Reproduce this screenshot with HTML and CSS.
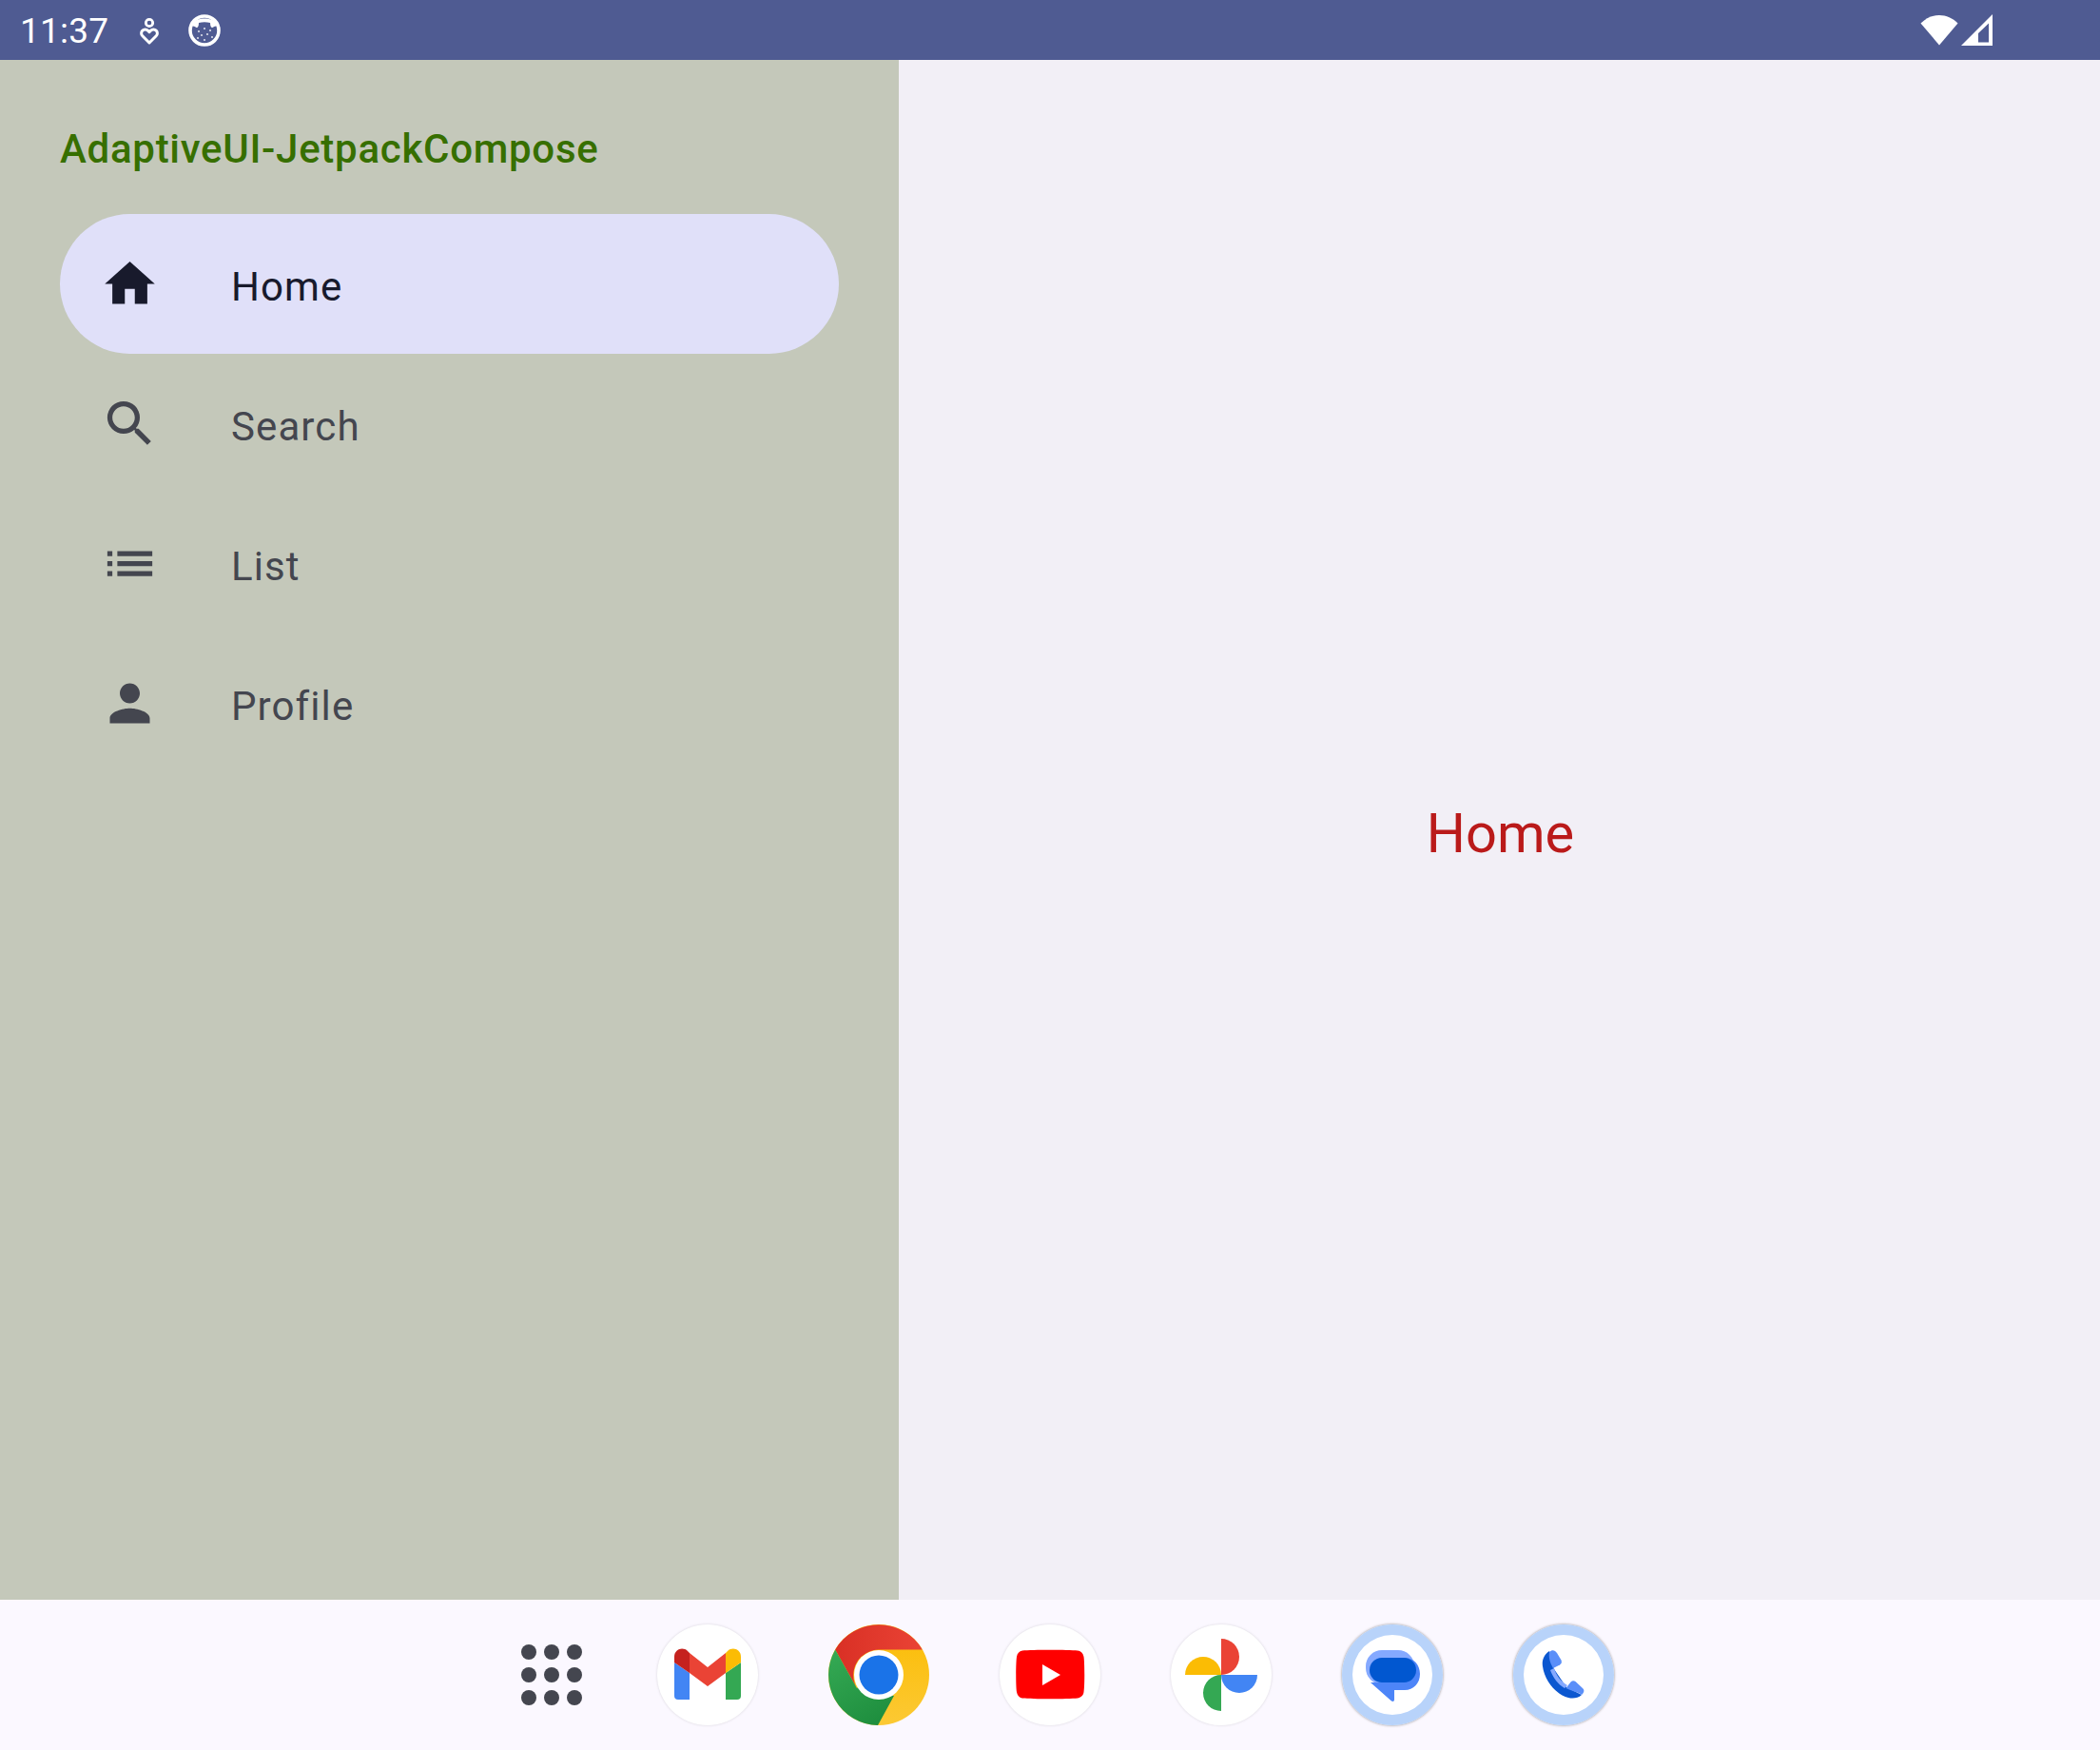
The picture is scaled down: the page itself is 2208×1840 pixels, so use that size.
FILE: index.html
```html
<!DOCTYPE html>
<html lang="en">
<head>
<meta charset="utf-8">
<title>AdaptiveUI-JetpackCompose</title>
<link rel="stylesheet" href="styles.css">
</head>
<body>
<div class="screen">
  <header class="status">
    <div class="status-left">
      <span class="time">11:37</span>
      <svg class="st-heart" viewBox="0 0 20 30"><circle cx="10" cy="7" r="3.7" fill="none" stroke="#fff" stroke-width="2.8"/><path d="M10 28 2.800 20.800a4 4 0 0 1 0-5.700 4 4 0 0 1 5.700 0L10 16.600l1.500-1.500a4 4 0 0 1 5.700 0 4 4 0 0 1 0 5.700z" fill="none" stroke="#fff" stroke-width="3" stroke-linejoin="round"/></svg>
      <svg class="st-face" viewBox="0 0 34 34"><circle cx="17" cy="17" r="15" fill="#4f5b92" stroke="#fff" stroke-width="3.6"/><path d="M3 12C6 2 28 2 31 12L27 13C25 15 23 14 23 9 19 8 15 8 11 9 11 14 9 15 7 13z" fill="#fff"/><g fill="#fff" opacity=".8"><circle cx="11" cy="18" r="1.100"/><circle cx="17" cy="15" r="1.100"/><circle cx="23" cy="17" r="1.100"/><circle cx="14" cy="22" r="1.100"/><circle cx="20" cy="21" r="1.100"/><circle cx="25" cy="24" r="1.100"/><circle cx="10" cy="25" r="1.100"/><circle cx="17" cy="27" r="1.100"/></g></svg>
    </div>
    <div class="status-right">
      <svg class="st-wifi" viewBox="0 0 40 33"><path d="M20 32.500 .5 9.500C6 4 12.500 1 20 1s14 3 19.500 8.500z" fill="#fff"/></svg>
      <svg class="st-signal" viewBox="0 0 33 33"><path fill-rule="evenodd" d="M33 0v33H0zM29 9.500 18 20v9.500h11z" fill="#fff"/></svg>
    </div>
  </header>

  <main class="body">
    <nav class="drawer">
      <h1 class="app-title">AdaptiveUI-JetpackCompose</h1>
      <ul class="nav-list">
        <li class="nav-item active">
          <svg class="nav-icon" viewBox="0 0 24 24"><path d="M10 20v-6h4v6h5v-8h3L12 3 2 12h3v8z"/></svg>
          <span class="nav-label">Home</span>
        </li>
        <li class="nav-item">
          <svg class="nav-icon" viewBox="0 0 24 24"><path d="M15.500 14h-.79l-.28-.27A6.471 6.471 0 0 0 16 9.500 6.500 6.500 0 1 0 9.500 16c1.610 0 3.090-.59 4.230-1.570l.27.28v.79l5 4.990L20.490 19l-4.990-5zm-6 0C7.010 14 5 11.990 5 9.500S7.010 5 9.500 5 14 7.010 14 9.500 11.990 14 9.500 14z"/></svg>
          <span class="nav-label">Search</span>
        </li>
        <li class="nav-item">
          <svg class="nav-icon" viewBox="0 0 24 24"><path d="M3 13h2v-2H3v2zm0 4h2v-2H3v2zm0-8h2V7H3v2zm4 4h14v-2H7v2zm0 4h14v-2H7v2zM7 7v2h14V7H7z"/></svg>
          <span class="nav-label">List</span>
        </li>
        <li class="nav-item">
          <svg class="nav-icon" viewBox="0 0 24 24"><path d="M12 12c2.210 0 4-1.790 4-4s-1.790-4-4-4-4 1.790-4 4 1.790 4 4 4zm0 2c-2.670 0-8 1.340-8 4v2h16v-2c0-2.660-5.330-4-8-4z"/></svg>
          <span class="nav-label">Profile</span>
        </li>
      </ul>
    </nav>
    <section class="content"><span class="content-text">Home</span></section>
  </main>

  <footer class="dock">
    <div class="dock-apps">
      <svg class="dots" viewBox="0 0 64 64"><g fill="#44464f"><circle cx="8" cy="8" r="8"/><circle cx="32" cy="8" r="8"/><circle cx="56" cy="8" r="8"/><circle cx="8" cy="32" r="8"/><circle cx="32" cy="32" r="8"/><circle cx="56" cy="32" r="8"/><circle cx="8" cy="56" r="8"/><circle cx="32" cy="56" r="8"/><circle cx="56" cy="56" r="8"/></g></svg>
      <div class="app-icon">
        <svg viewBox="0 0 106 106"><path d="M18 40 34 51V79H22a4 4 0 0 1-4-4z" fill="#4285f4"/><path d="M88 40 72 51V79H84a4 4 0 0 0 4-4z" fill="#34a853"/><path d="M88 40V34C88 26 79 23 74 28L72 30V51z" fill="#fbbc04"/><path d="M18 40V34C18 26 27 23 32 28L34 30V51z" fill="#c5221f"/><path d="M34 30 53 45 72 30V51L53 65 34 51z" fill="#ea4335"/></svg>
      </div>
      <div class="app-icon bare">
        <svg viewBox="0 0 106 106"><defs><linearGradient id="cr" x1="0" y1="0" x2="1" y2="0"><stop offset="0" stop-color="#d93025"/><stop offset="1" stop-color="#ea4335"/></linearGradient><linearGradient id="cg" x1=".2" y1="0" x2=".7" y2="1"><stop offset="0" stop-color="#34a853"/><stop offset="1" stop-color="#1e8e3e"/></linearGradient><linearGradient id="cy" x1="0" y1="0" x2="0" y2="1"><stop offset="0" stop-color="#fbbc04"/><stop offset="1" stop-color="#fcc934"/></linearGradient></defs><circle cx="53" cy="53" r="53" fill="url(#cy)"/><path d="M7.200 26.500A53 53 0 0 1 98.800 26.500H53A27 27 0 0 0 29.600 66.500z" fill="url(#cr)"/><path d="M7.200 26.500 29.600 66.500 69 75 52 106A53 53 0 0 1 7.200 26.500z" fill="url(#cg)"/><circle cx="53" cy="53" r="26" fill="#fff"/><circle cx="53" cy="53" r="20.500" fill="#1a73e8"/></svg>
      </div>
      <div class="app-icon">
        <svg viewBox="0 0 106 106"><path d="M24 27.500C34 26.500 72 26.500 82 27.500 86 28 88 31 88.500 34 89.500 41 89.500 65 88.500 71 88 75 85 77 82 77.500 72 78.500 34 78.500 24 77.500 20.500 77 18.500 74 18 71 17 65 17 41 18 34 18.500 30.500 20.500 28 24 27.500z" fill="#f00"/><path d="M45 42v22l19-11z" fill="#fff"/></svg>
      </div>
      <div class="app-icon">
        <svg viewBox="0 0 106 106"><path d="M53 53V15a19 19 0 0 1 0 38z" fill="#ea4335"/><path d="M53 53H91a19 19 0 0 1-38 0z" fill="#4285f4"/><path d="M53 53V91a19 19 0 0 1 0-38z" fill="#34a853"/><path d="M53 53H15a19 19 0 0 1 38 0z" fill="#fbbc04"/></svg>
      </div>
      <div class="app-icon ringed">
        <svg viewBox="0 0 106 106"><rect x="25" y="27" width="51" height="36" rx="17" fill="#85a9ff"/><path d="M66 35H45V61H30L52 80.500C53.500 81.500 55 81 55 79V69H66C75 69 82 62 82 52S75 35 66 35z" fill="#4d85f8"/><rect x="29" y="35" width="49" height="26" rx="13" fill="#0157d0"/></svg>
      </div>
      <div class="app-icon ringed">
        <svg viewBox="0 0 106 106"><path d="M38 28C32 32 30 38 31 44 33 60 46 74 58 77 62 78 68 78 72 74L56 66 43 47z" fill="#0b57d0"/><path d="M39 48 43 46C45 53 50 60 57 64L54 67C47 63 42 56 39 48z" fill="#85a9ff"/><path d="M38 29C41 26 44 27 46 30L50.500 37.500C51.500 39.500 50.500 41.500 49 42.500L42 46C39 41 37 35 38 29z" fill="#5b8ff9"/><path d="M55.500 67 60.500 60.500C62 59 64 59 65.500 60L73 67C75 69 75 71 72 74 70 72 62 70 55.500 67z" fill="#5b8ff9"/></svg>
      </div>
    </div>
  </footer>
</div>
</body>
</html>
```

FILE: styles.css
```css
* { box-sizing: border-box; }
html, body { margin: 0; padding: 0; }
.screen { width: 2208px; height: 1840px; display: flex; flex-direction: column; font-family: Roboto, "Liberation Sans", sans-serif; overflow: hidden; }

.status { height: 63px; flex: none; background: #4f5b92; display: flex; align-items: center; justify-content: space-between; padding: 0 113px 0 21px; color: #fff; }
.status-left { display: flex; align-items: center; }
.time { font-size: 37px; line-height: 63px; padding-top: 2px; width: 126px; letter-spacing: .2px; }
.st-heart { width: 20px; height: 30px; margin-right: 31px; }
.st-face { width: 34px; height: 34px; }
.status-right { display: flex; align-items: center; gap: 3px; }
.st-wifi { width: 40px; height: 33px; }
.st-signal { width: 33px; height: 33px; }

.body { flex: 1; display: flex; min-height: 0; }
.drawer { width: 945px; flex: none; background: #c4c8ba; padding: 0 63px; }
.app-title { margin: 0; height: 162px; padding-top: 66px; font-size: 42px; line-height: 56px; font-weight: 500; letter-spacing: .72px; color: #376f00; }
.nav-list { list-style: none; margin: 0; padding: 0; }
.nav-item { height: 147px; border-radius: 74px; display: flex; align-items: center; padding-left: 42px; color: #44464f; }
.nav-item.active { background: #e0e0f9; color: #181a2c; }
.nav-icon { width: 63px; height: 63px; fill: currentColor; flex: none; }
.nav-label { margin-left: 75px; padding-top: 6px; font-size: 42px; letter-spacing: 1.1px; line-height: 56px; }

.content { flex: 1; background: #f2eff6; display: flex; align-items: center; justify-content: center; }
.content-text { font-size: 57.75px; padding: 6px 0 0 2px; color: #ba1a1a; line-height: 76px; }

.dock { height: 158px; flex: none; background: #fbf8ff; display: flex; align-items: center; padding-left: 548px; }
.dock-apps { display: flex; align-items: center; gap: 74px; }
.dots { width: 64px; height: 64px; margin-right: 5px; }
.app-icon { width: 106px; height: 106px; border-radius: 50%; background: #fff; box-shadow: 0 0 3px rgba(0,0,0,.14); flex: none; }
.app-icon svg { display: block; width: 100%; height: 100%; }
.app-icon.bare { background: none; box-shadow: none; }
.app-icon.ringed { box-shadow: inset 0 0 0 11px #b8d3fa, 0 0 3px rgba(0,0,0,.45); }
```
